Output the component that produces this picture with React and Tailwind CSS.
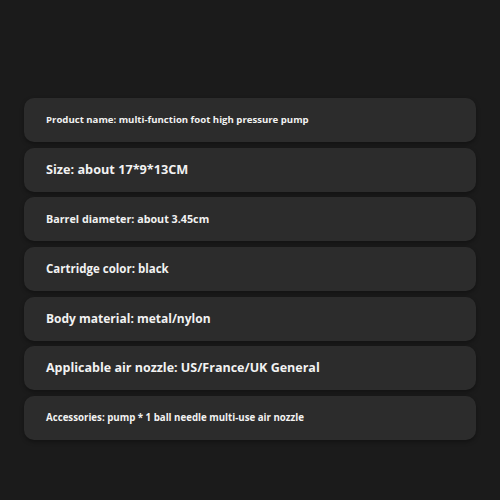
import React from 'react';

// Spec list rows for the product detail panel
const specs = [
  { text: 'Product name: multi-function foot high pressure pump', size: 'text-[9.6px]' },
  { text: 'Size: about 17*9*13CM', size: 'text-[12.7px]' },
  { text: 'Barrel diameter: about 3.45cm', size: 'text-[10.75px]' },
  { text: 'Cartridge color: black', size: 'text-[11.5px]' },
  { text: 'Body material: metal/nylon', size: 'text-[12px]' },
  { text: 'Applicable air nozzle: US/France/UK General', size: 'text-[12.5px]' },
  { text: 'Accessories: pump * 1 ball needle multi-use air nozzle', size: 'text-[9.7px]' },
];

const SpecRow = ({ text, size }) => (
  <div className="h-[44px] flex items-center px-[22px] rounded-[10px] bg-[#2c2c2c] shadow-[0_2px_4px_rgba(0,0,0,0.35)]">
    <p className={`${size} font-bold text-[#f2f2f2] leading-none`}>{text}</p>
  </div>
);

export default function App() {
  return (
    <div
      className="w-[500px] h-[500px] bg-[#1b1b1b] pl-[24px] pr-[24px] pt-[98px]"
      style={{ fontFamily: '"Open Sans", "Noto Sans", sans-serif' }}
    >
      <div className="flex flex-col gap-[5.67px]">
        {specs.map((s, i) => (
          <SpecRow key={i} {...s} />
        ))}
      </div>
    </div>
  );
}
